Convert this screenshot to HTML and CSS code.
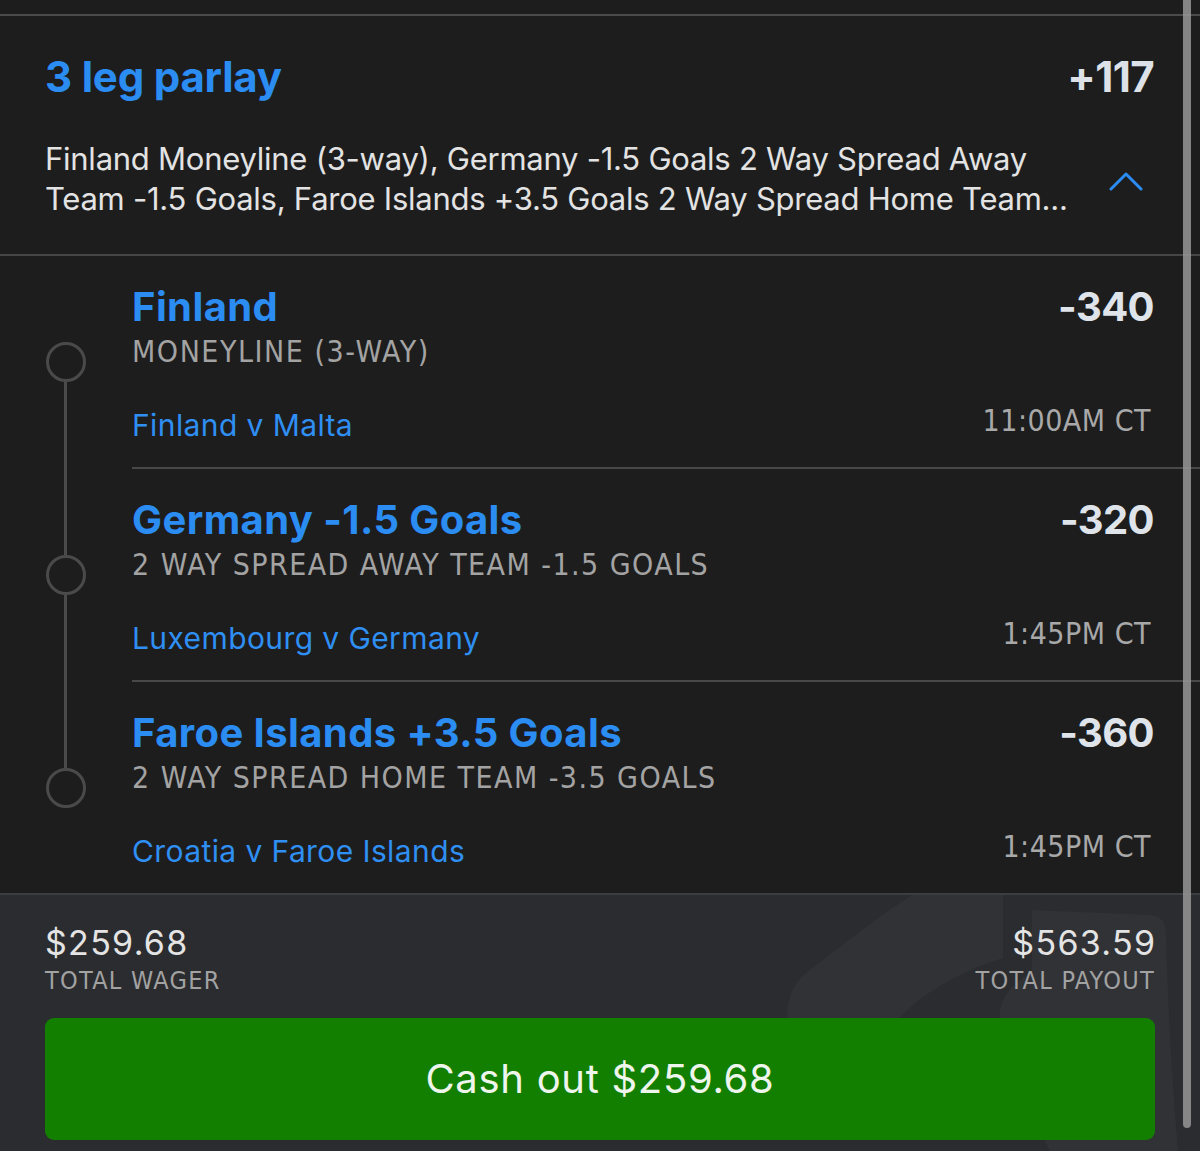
FILE: index.html
```html
<!DOCTYPE html>
<html>
<head>
<meta charset="utf-8">
<title>3 leg parlay</title>
<link rel="stylesheet" href="styles.css">
</head>
<body>
<div class="screen">
  <div class="topbar"></div>

  <section class="header">
    <div class="header-row">
      <h1 class="parlay-title">3 leg parlay</h1>
      <div class="parlay-odds">+117</div>
    </div>
    <div class="desc-row">
      <p class="desc">
        <span class="desc-line">Finland Moneyline (3-way), Germany -1.5 Goals 2 Way Spread Away</span>
        <span class="desc-line">Team -1.5 Goals, Faroe Islands +3.5 Goals 2 Way Spread Home Team...</span>
      </p>
      <svg class="chevron" viewBox="0 0 34 20" aria-hidden="true">
        <polyline points="2,18 17,3 32,18" fill="none" stroke="#2b8cf2" stroke-width="3" stroke-linecap="round" stroke-linejoin="round"/>
      </svg>
    </div>
  </section>

  <section class="legs">
    <div class="leg leg-first">
      <div class="track"><span class="seg seg-top"></span><span class="dot"></span><span class="seg seg-bottom"></span></div>
      <div class="leg-body">
        <div class="leg-row"><span class="leg-title">Finland</span><span class="leg-odds">-340</span></div>
        <div class="leg-market leg-market-short">MONEYLINE (3-WAY)</div>
        <div class="leg-row leg-row-event"><span class="leg-event">Finland v Malta</span><span class="leg-time">11:00AM CT</span></div>
      </div>
    </div>
    <div class="leg">
      <div class="track"><span class="seg seg-top"></span><span class="dot"></span><span class="seg seg-bottom"></span></div>
      <div class="leg-body">
        <div class="leg-row"><span class="leg-title">Germany -1.5 Goals</span><span class="leg-odds">-320</span></div>
        <div class="leg-market">2 WAY SPREAD AWAY TEAM -1.5 GOALS</div>
        <div class="leg-row leg-row-event"><span class="leg-event">Luxembourg v Germany</span><span class="leg-time">1:45PM CT</span></div>
      </div>
    </div>
    <div class="leg leg-last">
      <div class="track"><span class="seg seg-top"></span><span class="dot"></span><span class="seg seg-bottom"></span></div>
      <div class="leg-body">
        <div class="leg-row"><span class="leg-title">Faroe Islands +3.5 Goals</span><span class="leg-odds">-360</span></div>
        <div class="leg-market">2 WAY SPREAD HOME TEAM -3.5 GOALS</div>
        <div class="leg-row leg-row-event"><span class="leg-event">Croatia v Faroe Islands</span><span class="leg-time">1:45PM CT</span></div>
      </div>
    </div>
  </section>

  <section class="footer">
    <svg class="watermark" viewBox="0 895 1200 256" aria-hidden="true">
      <path d="M788,1030 C786,1000 790,985 812,968 C850,940 880,915 912,895 L1003,895 L1003,958 C960,972 920,992 888,1030 Z" fill="#313236"/>
      <path d="M1032,910 L1150,915 C1162,916 1166,922 1166,936 C1168,1010 1172,1080 1178,1151 L1050,1151 C1030,1110 1010,1060 1000,1020 C998,1000 1010,985 1032,972 Z" fill="#313236"/>
    </svg>
    <div class="totals">
      <div class="total">
        <div class="amount">$259.68</div>
        <div class="label">TOTAL WAGER</div>
      </div>
      <div class="total total-right">
        <div class="amount">$563.59</div>
        <div class="label">TOTAL PAYOUT</div>
      </div>
    </div>
    <button class="cashout">Cash out $259.68</button>
  </section>

  <div class="scrollbar"></div>
</div>
</body>
</html>
```

FILE: styles.css
```css
html, body {
  margin: 0;
  padding: 0;
  background: #1d1d1e;
}

.screen {
  position: relative;
  width: 1200px;
  height: 1151px;
  overflow: hidden;
  background: #1d1d1e;
  font-family: "Inter", "Lato", sans-serif;
}

.topbar {
  height: 14px;
  border-bottom: 2px solid #4b4b4b;
}

.header {
  padding: 36px 46px 35px 45px;
  border-bottom: 2px solid #464646;
}

.header-row {
  display: flex;
  justify-content: space-between;
  align-items: flex-start;
}

.parlay-title {
  margin: 0;
  font-weight: 700;
  font-size: 42px;
  line-height: 50px;
  color: #2b8cf2;
  letter-spacing: -0.2px;
}

.parlay-odds {
  font-weight: 700;
  font-size: 42px;
  line-height: 50px;
  color: #dde1e8;
  letter-spacing: -0.6px;
}

.desc-row {
  display: flex;
  align-items: center;
  margin-top: 37px;
}

.desc {
  margin: 0;
  flex: 1;
  font-size: 31px;
  line-height: 40px;
  letter-spacing: -0.25px;
  color: #e3e3e3;
}

.desc-line {
  display: block;
  white-space: nowrap;
}

.chevron {
  width: 34px;
  height: 20px;
  margin-top: 4px;
  margin-right: 11px;
  flex: none;
}

.leg {
  display: grid;
  grid-template-columns: 41px 1fr;
  column-gap: 46px;
  padding-left: 45px;
}

.track {
  display: flex;
  flex-direction: column;
  align-items: center;
}

.seg {
  width: 3px;
  background: #4a4a4a;
}

.seg-top {
  height: 86px;
  flex: none;
}

.seg-bottom {
  flex: 1;
}

.leg-first .seg-top,
.leg-last .seg-bottom {
  background: transparent;
}

.dot {
  width: 40px;
  height: 40px;
  box-sizing: border-box;
  border: 3px solid #4a4a4a;
  border-radius: 50%;
  flex: none;
}

.leg-body {
  padding: 27.5px 46px 24px 0;
  border-bottom: 2px solid #484848;
}

.leg-last .leg-body {
  border-bottom: 0;
}

.leg-row {
  display: flex;
  justify-content: space-between;
  align-items: flex-start;
}

.leg-title {
  font-weight: 700;
  font-size: 40px;
  line-height: 46px;
  color: #2b8cf2;
  letter-spacing: 0.4px;
}

.leg-odds {
  font-weight: 700;
  font-size: 40px;
  line-height: 46px;
  color: #dfe3ea;
  letter-spacing: -0.6px;
}

.leg-market {
  margin-top: 4px;
  font-family: "DejaVu Sans Condensed", "Roboto", sans-serif;
  font-size: 30px;
  line-height: 36px;
  letter-spacing: 1.45px;
  color: #a3a3a3;
  white-space: nowrap;
}

.leg-market-short {
  letter-spacing: 1.55px;
}

.leg-row-event {
  margin-top: 37.5px;
}

.leg-event {
  font-size: 30px;
  line-height: 36px;
  letter-spacing: 0.4px;
  color: #2f8ff2;
}

.leg-time {
  margin-right: 3px;
  font-family: "DejaVu Sans Condensed", "Roboto", sans-serif;
  font-size: 30px;
  line-height: 28px;
  letter-spacing: 0.5px;
  color: #a8a8a8;
  white-space: nowrap;
}

.footer {
  position: relative;
  border-top: 2px solid #3c3d41;
  background: #2b2c2f;
  padding: 27.6px 45px 11px;
  overflow: hidden;
}

.watermark {
  position: absolute;
  left: 0;
  top: 0;
  width: 1200px;
  height: 256px;
}

.totals {
  position: relative;
  display: flex;
  justify-content: space-between;
}

.total-right {
  text-align: right;
}

.amount {
  font-size: 34px;
  line-height: 40px;
  letter-spacing: 1.3px;
  color: #e4e4e4;
}

.total-right .amount {
  margin-right: -1.3px;
}

.label {
  margin-top: 3.7px;
  font-family: "DejaVu Sans Condensed", "Roboto", sans-serif;
  font-size: 25px;
  line-height: 30px;
  letter-spacing: 1.3px;
  color: #a2a2a2;
}

.cashout {
  position: relative;
  display: block;
  width: 100%;
  height: 122px;
  margin-top: 21.7px;
  border: 0;
  border-radius: 9px;
  background: #127f00;
  color: #eef5ec;
  font-family: "Inter", "Lato", sans-serif;
  font-size: 40px;
  line-height: 48px;
  letter-spacing: 0.7px;
  padding: 0;
}

.scrollbar {
  position: absolute;
  left: 1183px;
  top: 0;
  width: 8px;
  height: 1128px;
  background: rgba(150, 150, 150, 0.85);
  border-radius: 0 0 4px 4px;
}
```
